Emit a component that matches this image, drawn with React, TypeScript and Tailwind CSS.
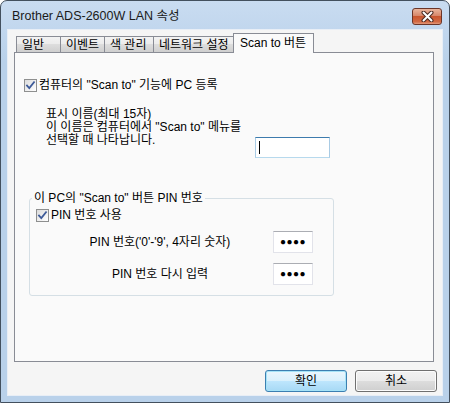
import React from "react";

const font = { fontFamily: '"Liberation Sans", "Noto Sans CJK KR", sans-serif' };

function CheckBox() {
  return (
    <span className="w-[13px] h-[13px] shrink-0 border border-[#8e8f8f] bg-[linear-gradient(135deg,#dcdcdc,#ffffff)] flex items-center justify-center">
      <svg width="11" height="11" viewBox="0 0 11 11">
        <path d="M2 5.5 L4.3 8 L9 2.2" fill="none" stroke="#3d5a98" strokeWidth="1.8" strokeLinecap="square" />
      </svg>
    </span>
  );
}

function PinField() {
  return (
    <div className="w-[40px] h-[22px] bg-white border border-[#e2e3ea] border-t-[#abadb3] flex items-center pl-[6px]">
      <span className="text-[10px] font-bold tracking-[0.5px] leading-none text-black">●●●●</span>
    </div>
  );
}

const tabs = [
  { label: "일반", w: "w-[45px]" },
  { label: "이벤트", w: "w-[45px]" },
  { label: "색 관리", w: "w-[50px]" },
  { label: "네트워크 설정", w: "w-[82px]" },
];

export default function App() {
  return (
    <div style={font} className="w-[450px] h-[403px] border border-[#43505e] rounded-t-[7px] bg-[linear-gradient(#c9dcf1,#b9d1ea_60px,#b9d1ea)] flex flex-col px-[6px] pb-[6px] text-[12px] text-black">
      {/* title bar */}
      <div className="h-[28px] pt-[3px] flex items-center justify-between pl-[5px] pr-[1px]">
        <span className="text-[12.5px] text-[#1a1a1a]">Brother ADS-2600W LAN 속성</span>
        <div className="w-[30px] h-[17px] rounded-[3px] border border-[#6b3528] bg-[linear-gradient(#eab59c,#d7876a_45%,#c9562f_50%,#d26a44_85%,#e39a7c)] flex items-center justify-center">
          <svg width="13" height="11" viewBox="0 0 13 11">
            <path d="M2.5 1.5 L10.5 9.5 M10.5 1.5 L2.5 9.5" stroke="#4b2a22" strokeWidth="4" strokeLinecap="round" />
            <path d="M2.5 1.5 L10.5 9.5 M10.5 1.5 L2.5 9.5" stroke="#ffffff" strokeWidth="2" strokeLinecap="round" />
          </svg>
        </div>
      </div>

      {/* client */}
      <div className="flex-1 border border-[#e8eef6] bg-[#f5f5f5] flex flex-col pt-[3px]">
        {/* tabs */}
        <div className="h-[19px] flex items-end ml-[8px]">
          {tabs.map((t) => (
            <div
              key={t.label}
              className={`${t.w} h-[16px] border border-b-0 border-[#898c95] -ml-px first:ml-0 bg-[linear-gradient(#f3f3f3,#ebebeb_50%,#dddddd_50%,#cfcfcf)] pl-[5px] leading-[16px] whitespace-nowrap`}
            >
              {t.label}
            </div>
          ))}
          <div className="relative z-10 w-[81px] h-[20px] -ml-[2px] -mb-px border border-b-0 border-[#898c95] bg-[#fafafa] pl-[6px] leading-[18px] whitespace-nowrap">
            Scan to 버튼
          </div>
        </div>

        {/* panel */}
        <div className="w-[420px] h-[310px] ml-[6px] border border-[#898c95] bg-[#fafafa] pt-[26px] pl-[9px]">
          <label className="h-[13px] flex items-center gap-[2px]">
            <CheckBox />
            <span className="leading-[13px]">컴퓨터의 "Scan to" 기능에 PC 등록</span>
          </label>

          <div className="flex items-start mt-[16px] ml-[22px]">
            <div className="w-[209px] leading-[13px]">
              <div>표시 이름(최대 15자)</div>
              <div>이 이름은 컴퓨터에서 "Scan to" 메뉴를</div>
              <div>선택할 때 나타납니다.</div>
            </div>
            <div className="w-[75px] h-[21px] mt-[29px] bg-white border border-[#a9cbe4] border-t-[#3d7bad] border-b-[#b7d9ed] flex items-center pl-[3px]">
              <span className="w-px h-[13px] bg-black" />
            </div>
          </div>

          <fieldset className="w-[305px] ml-[5px] mt-[34px] border border-[#d5dfe5] rounded-[3px] pb-[10px]">
            <legend className="ml-[2px] px-[2px] leading-[13px]">이 PC의 "Scan to" 버튼 PIN 번호</legend>
            <label className="h-[13px] mt-[4px] ml-[6px] flex items-center gap-[2px]">
              <CheckBox />
              <span className="leading-[13px]">PIN 번호 사용</span>
            </label>
            <div className="flex items-center mt-[9px] ml-[17px]">
              <span className="w-[226px] text-center">PIN 번호('0'-'9', 4자리 숫자)</span>
              <PinField />
            </div>
            <div className="flex items-center mt-[10px] ml-[17px]">
              <span className="w-[226px] text-center">PIN 번호 다시 입력</span>
              <PinField />
            </div>
          </fieldset>
        </div>

        {/* buttons */}
        <div className="flex justify-end gap-[8px] mt-[8px] pr-[5px]">
          <button className="w-[82px] h-[22px] rounded-[3px] border border-[#3c7fb1] bg-[linear-gradient(#eaf6fd,#d9f0fc_50%,#bee6fd_50%,#a7d9f5)] shadow-[inset_0_0_0_1px_#a6e3f7]">
            확인
          </button>
          <button className="w-[82px] h-[22px] rounded-[3px] border border-[#707070] bg-[linear-gradient(#f2f2f2,#ebebeb_50%,#dddddd_50%,#cfcfcf)] shadow-[inset_0_0_0_1px_#fcfcfc]">
            취소
          </button>
        </div>
      </div>
    </div>
  );
}
